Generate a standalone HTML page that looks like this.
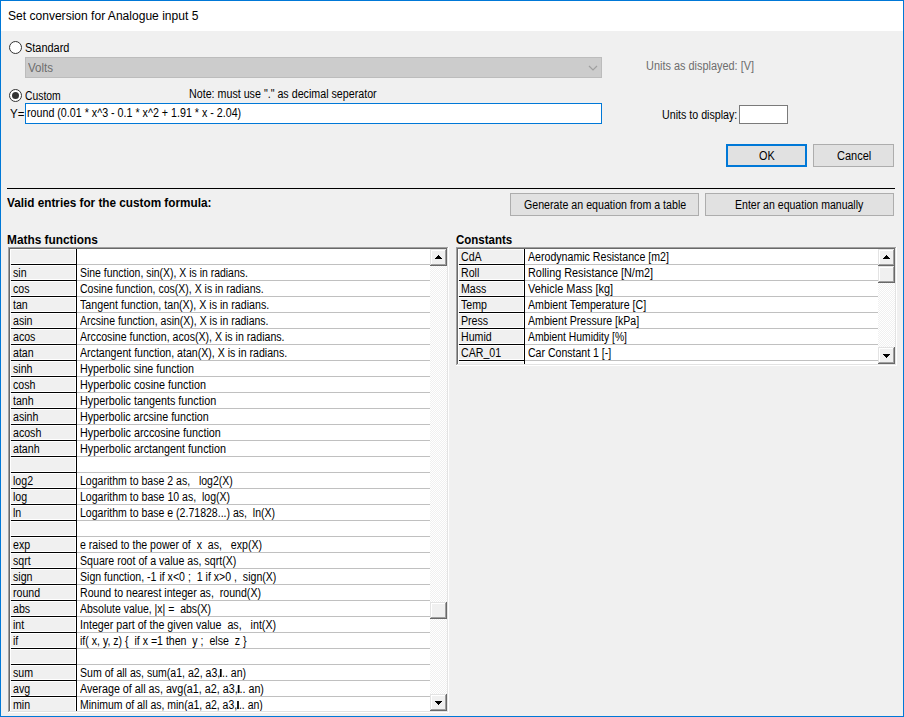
<!DOCTYPE html>
<html><head><meta charset="utf-8"><style>
html,body{margin:0;padding:0;width:904px;height:717px;overflow:hidden;background:#f0f0f0}
.b{position:absolute;box-sizing:border-box}
.t{position:absolute;font-family:"Liberation Sans",sans-serif;line-height:16px;height:16px;white-space:pre;transform-origin:0 0}
svg.b{display:block}
</style></head><body>
<div class="b" style="left:0px;top:0px;width:904px;height:717px;background:#0078d7"></div><div class="b" style="left:1px;top:1px;width:902px;height:715px;background:#f0f0f0"></div><div class="b" style="left:1px;top:1px;width:902px;height:30px;background:#fff"></div><div class="t" style="left:7.8px;top:8px;color:#000;font-size:12px;transform:scaleX(1.0046);">Set conversion for Analogue input 5</div><div class="b" style="left:9px;top:41px;width:13px;height:13px;border:1px solid #333;border-radius:50%;background:#fff;box-sizing:border-box"></div><div class="t" style="left:24.51px;top:40px;color:#000;font-size:12px;transform:scaleX(0.9122);">Standard</div><div class="b" style="left:25px;top:57px;width:577px;height:21px;background:#ccc;border:1px solid #bcbcbc;box-sizing:border-box"></div><div class="t" style="left:28.39px;top:60px;color:#6d6d6d;font-size:12px;transform:scaleX(0.9643);">Volts</div><svg class="b" style="left:588px;top:64px" width="11" height="8"><polyline points="1,2 5,6 9,2" fill="none" stroke="#a0a0a0" stroke-width="1.2"/></svg><div class="t" style="left:645.88px;top:57.5px;color:#6d6d6d;font-size:12px;transform:scaleX(0.9095);">Units as displayed: [V]</div><div class="b" style="left:9px;top:89px;width:13px;height:13px;border:1px solid #333;border-radius:50%;background:#fff;box-sizing:border-box"></div><div class="b" style="left:12px;top:92px;width:7px;height:7px;border-radius:50%;background:#333"></div><div class="t" style="left:25.17px;top:88px;color:#000;font-size:12px;transform:scaleX(0.8646);">Custom</div><div class="t" style="left:188.79px;top:86px;color:#000;font-size:12px;transform:scaleX(0.8911);">Note: must use &quot;.&quot; as decimal seperator</div><div class="t" style="left:10.14px;top:106px;color:#000;font-size:12px;transform:scaleX(0.9596);">Y=</div><div class="b" style="left:25px;top:103px;width:577px;height:21px;background:#fff;border:1px solid #0078d7;box-sizing:border-box"></div><div class="t" style="left:27.31px;top:105px;color:#000;font-size:12px;transform:scaleX(0.8909);">round (0.01 * x^3 - 0.1 * x^2 + 1.91 * x - 2.04)</div><div class="t" style="left:661.6px;top:106.5px;color:#000;font-size:12px;transform:scaleX(0.8893);">Units to display:</div><div class="b" style="left:739px;top:105px;width:49px;height:19px;background:#fff;border:1px solid #7a7a7a;box-sizing:border-box"></div><div class="b" style="left:726px;top:144px;width:81px;height:23px;background:#e1e1e1;border:2px solid #0078d7;box-sizing:border-box"></div><div class="t" style="left:758.91px;top:148px;color:#000;font-size:12px;transform:scaleX(0.9035);">OK</div><div class="b" style="left:813px;top:144px;width:81px;height:23px;background:#e1e1e1;border:1px solid #adadad;box-sizing:border-box"></div><div class="t" style="left:836.63px;top:148px;color:#000;font-size:12px;transform:scaleX(0.9188);">Cancel</div><div class="b" style="left:7px;top:188px;width:888px;height:1px;background:#000"></div><div class="t" style="left:6.88px;top:195px;color:#000;font-size:12px;font-weight:bold;transform:scaleX(0.9791);">Valid entries for the custom formula:</div><div class="b" style="left:510px;top:193px;width:189px;height:23px;background:#e1e1e1;border:1px solid #adadad;box-sizing:border-box"></div><div class="t" style="left:523.64px;top:197px;color:#000;font-size:12px;transform:scaleX(0.8872);">Generate an equation from a table</div><div class="b" style="left:705px;top:193px;width:189px;height:23px;background:#e1e1e1;border:1px solid #adadad;box-sizing:border-box"></div><div class="t" style="left:735.17px;top:197px;color:#000;font-size:12px;transform:scaleX(0.8782);">Enter an equation manually</div><div class="t" style="left:6.82px;top:232px;color:#000;font-size:12px;font-weight:bold;transform:scaleX(0.9882);">Maths functions</div><div class="t" style="left:455.66px;top:232px;color:#000;font-size:12px;font-weight:bold;transform:scaleX(0.9589);">Constants</div><div class="b" style="left:8px;top:247px;width:441px;height:466px;background:#fff"></div><div class="b" style="left:8px;top:247px;width:440px;height:465px;background:#a0a0a0"></div><div class="b" style="left:9px;top:248px;width:439px;height:464px;background:#e3e3e3"></div><div class="b" style="left:9px;top:248px;width:438px;height:463px;background:#696969"></div><div class="b" style="left:10px;top:249px;width:437px;height:462px;background:#fff"></div><div class="b" style="left:10px;top:249px;width:437px;height:462px;overflow:hidden;background:#fff"><div class="b" style="left:0px;top:0px;width:66px;height:462px;background:#f0f0f0"></div><div class="b" style="left:66px;top:0px;width:1px;height:462px;background:#000"></div><div class="b" style="left:0px;top:0px;width:66px;height:15px;box-shadow:inset 1px 1px 0 #fff,inset -1px -1px 0 #fff"></div><div class="b" style="left:1px;top:15px;width:66px;height:1px;background:#000"></div><div class="b" style="left:67px;top:15px;width:353px;height:1px;background:#c0c0c0"></div><div class="b" style="left:0px;top:16px;width:66px;height:15px;box-shadow:inset 1px 1px 0 #fff,inset -1px -1px 0 #fff"></div><div class="b" style="left:1px;top:31px;width:66px;height:1px;background:#000"></div><div class="b" style="left:67px;top:31px;width:353px;height:1px;background:#c0c0c0"></div><div class="t" style="left:3px;top:16px;color:#000;font-size:12px;transform:scaleX(0.885);">sin</div><div class="t" style="left:69.5px;top:16px;color:#000;font-size:12px;transform:scaleX(0.8707);">Sine function, sin(X), X is in radians.</div><div class="b" style="left:0px;top:32px;width:66px;height:15px;box-shadow:inset 1px 1px 0 #fff,inset -1px -1px 0 #fff"></div><div class="b" style="left:1px;top:47px;width:66px;height:1px;background:#000"></div><div class="b" style="left:67px;top:47px;width:353px;height:1px;background:#c0c0c0"></div><div class="t" style="left:3px;top:32px;color:#000;font-size:12px;transform:scaleX(0.885);">cos</div><div class="t" style="left:69.5px;top:32px;color:#000;font-size:12px;transform:scaleX(0.877);">Cosine function, cos(X), X is in radians.</div><div class="b" style="left:0px;top:48px;width:66px;height:15px;box-shadow:inset 1px 1px 0 #fff,inset -1px -1px 0 #fff"></div><div class="b" style="left:1px;top:63px;width:66px;height:1px;background:#000"></div><div class="b" style="left:67px;top:63px;width:353px;height:1px;background:#c0c0c0"></div><div class="t" style="left:3px;top:48px;color:#000;font-size:12px;transform:scaleX(0.885);">tan</div><div class="t" style="left:69.5px;top:48px;color:#000;font-size:12px;transform:scaleX(0.8891);">Tangent function, tan(X), X is in radians.</div><div class="b" style="left:0px;top:64px;width:66px;height:15px;box-shadow:inset 1px 1px 0 #fff,inset -1px -1px 0 #fff"></div><div class="b" style="left:1px;top:79px;width:66px;height:1px;background:#000"></div><div class="b" style="left:67px;top:79px;width:353px;height:1px;background:#c0c0c0"></div><div class="t" style="left:3px;top:64px;color:#000;font-size:12px;transform:scaleX(0.885);">asin</div><div class="t" style="left:69.5px;top:64px;color:#000;font-size:12px;transform:scaleX(0.875);">Arcsine function, asin(X), X is in radians.</div><div class="b" style="left:0px;top:80px;width:66px;height:15px;box-shadow:inset 1px 1px 0 #fff,inset -1px -1px 0 #fff"></div><div class="b" style="left:1px;top:95px;width:66px;height:1px;background:#000"></div><div class="b" style="left:67px;top:95px;width:353px;height:1px;background:#c0c0c0"></div><div class="t" style="left:3px;top:80px;color:#000;font-size:12px;transform:scaleX(0.885);">acos</div><div class="t" style="left:69.5px;top:80px;color:#000;font-size:12px;transform:scaleX(0.8838);">Arccosine function, acos(X), X is in radians.</div><div class="b" style="left:0px;top:96px;width:66px;height:15px;box-shadow:inset 1px 1px 0 #fff,inset -1px -1px 0 #fff"></div><div class="b" style="left:1px;top:111px;width:66px;height:1px;background:#000"></div><div class="b" style="left:67px;top:111px;width:353px;height:1px;background:#c0c0c0"></div><div class="t" style="left:3px;top:96px;color:#000;font-size:12px;transform:scaleX(0.885);">atan</div><div class="t" style="left:69.5px;top:96px;color:#000;font-size:12px;transform:scaleX(0.8824);">Arctangent function, atan(X), X is in radians.</div><div class="b" style="left:0px;top:112px;width:66px;height:15px;box-shadow:inset 1px 1px 0 #fff,inset -1px -1px 0 #fff"></div><div class="b" style="left:1px;top:127px;width:66px;height:1px;background:#000"></div><div class="b" style="left:67px;top:127px;width:353px;height:1px;background:#c0c0c0"></div><div class="t" style="left:3px;top:112px;color:#000;font-size:12px;transform:scaleX(0.885);">sinh</div><div class="t" style="left:69.5px;top:112px;color:#000;font-size:12px;transform:scaleX(0.8937);">Hyperbolic sine function</div><div class="b" style="left:0px;top:128px;width:66px;height:15px;box-shadow:inset 1px 1px 0 #fff,inset -1px -1px 0 #fff"></div><div class="b" style="left:1px;top:143px;width:66px;height:1px;background:#000"></div><div class="b" style="left:67px;top:143px;width:353px;height:1px;background:#c0c0c0"></div><div class="t" style="left:3px;top:128px;color:#000;font-size:12px;transform:scaleX(0.885);">cosh</div><div class="t" style="left:69.5px;top:128px;color:#000;font-size:12px;transform:scaleX(0.8987);">Hyperbolic cosine function</div><div class="b" style="left:0px;top:144px;width:66px;height:15px;box-shadow:inset 1px 1px 0 #fff,inset -1px -1px 0 #fff"></div><div class="b" style="left:1px;top:159px;width:66px;height:1px;background:#000"></div><div class="b" style="left:67px;top:159px;width:353px;height:1px;background:#c0c0c0"></div><div class="t" style="left:3px;top:144px;color:#000;font-size:12px;transform:scaleX(0.885);">tanh</div><div class="t" style="left:69.5px;top:144px;color:#000;font-size:12px;transform:scaleX(0.8992);">Hyperbolic tangents function</div><div class="b" style="left:0px;top:160px;width:66px;height:15px;box-shadow:inset 1px 1px 0 #fff,inset -1px -1px 0 #fff"></div><div class="b" style="left:1px;top:175px;width:66px;height:1px;background:#000"></div><div class="b" style="left:67px;top:175px;width:353px;height:1px;background:#c0c0c0"></div><div class="t" style="left:3px;top:160px;color:#000;font-size:12px;transform:scaleX(0.885);">asinh</div><div class="t" style="left:69.5px;top:160px;color:#000;font-size:12px;transform:scaleX(0.8932);">Hyperbolic arcsine function</div><div class="b" style="left:0px;top:176px;width:66px;height:15px;box-shadow:inset 1px 1px 0 #fff,inset -1px -1px 0 #fff"></div><div class="b" style="left:1px;top:191px;width:66px;height:1px;background:#000"></div><div class="b" style="left:67px;top:191px;width:353px;height:1px;background:#c0c0c0"></div><div class="t" style="left:3px;top:176px;color:#000;font-size:12px;transform:scaleX(0.885);">acosh</div><div class="t" style="left:69.5px;top:176px;color:#000;font-size:12px;transform:scaleX(0.8987);">Hyperbolic arccosine function</div><div class="b" style="left:0px;top:192px;width:66px;height:15px;box-shadow:inset 1px 1px 0 #fff,inset -1px -1px 0 #fff"></div><div class="b" style="left:1px;top:207px;width:66px;height:1px;background:#000"></div><div class="b" style="left:67px;top:207px;width:353px;height:1px;background:#c0c0c0"></div><div class="t" style="left:3px;top:192px;color:#000;font-size:12px;transform:scaleX(0.885);">atanh</div><div class="t" style="left:69.5px;top:192px;color:#000;font-size:12px;transform:scaleX(0.9004);">Hyperbolic arctangent function</div><div class="b" style="left:0px;top:208px;width:66px;height:15px;box-shadow:inset 1px 1px 0 #fff,inset -1px -1px 0 #fff"></div><div class="b" style="left:1px;top:223px;width:66px;height:1px;background:#000"></div><div class="b" style="left:67px;top:223px;width:353px;height:1px;background:#c0c0c0"></div><div class="b" style="left:0px;top:224px;width:66px;height:15px;box-shadow:inset 1px 1px 0 #fff,inset -1px -1px 0 #fff"></div><div class="b" style="left:1px;top:239px;width:66px;height:1px;background:#000"></div><div class="b" style="left:67px;top:239px;width:353px;height:1px;background:#c0c0c0"></div><div class="t" style="left:3px;top:224px;color:#000;font-size:12px;transform:scaleX(0.885);">log2</div><div class="t" style="left:69.5px;top:224px;color:#000;font-size:12px;transform:scaleX(0.8781);">Logarithm to base 2 as,   log2(X)</div><div class="b" style="left:0px;top:240px;width:66px;height:15px;box-shadow:inset 1px 1px 0 #fff,inset -1px -1px 0 #fff"></div><div class="b" style="left:1px;top:255px;width:66px;height:1px;background:#000"></div><div class="b" style="left:67px;top:255px;width:353px;height:1px;background:#c0c0c0"></div><div class="t" style="left:3px;top:240px;color:#000;font-size:12px;transform:scaleX(0.885);">log</div><div class="t" style="left:69.5px;top:240px;color:#000;font-size:12px;transform:scaleX(0.8792);">Logarithm to base 10 as,  log(X)</div><div class="b" style="left:0px;top:256px;width:66px;height:15px;box-shadow:inset 1px 1px 0 #fff,inset -1px -1px 0 #fff"></div><div class="b" style="left:1px;top:271px;width:66px;height:1px;background:#000"></div><div class="b" style="left:67px;top:271px;width:353px;height:1px;background:#c0c0c0"></div><div class="t" style="left:3px;top:256px;color:#000;font-size:12px;transform:scaleX(0.885);">ln</div><div class="t" style="left:69.5px;top:256px;color:#000;font-size:12px;transform:scaleX(0.8785);">Logarithm to base e (2.71828...) as,  ln(X)</div><div class="b" style="left:0px;top:272px;width:66px;height:15px;box-shadow:inset 1px 1px 0 #fff,inset -1px -1px 0 #fff"></div><div class="b" style="left:1px;top:287px;width:66px;height:1px;background:#000"></div><div class="b" style="left:67px;top:287px;width:353px;height:1px;background:#c0c0c0"></div><div class="b" style="left:0px;top:288px;width:66px;height:15px;box-shadow:inset 1px 1px 0 #fff,inset -1px -1px 0 #fff"></div><div class="b" style="left:1px;top:303px;width:66px;height:1px;background:#000"></div><div class="b" style="left:67px;top:303px;width:353px;height:1px;background:#c0c0c0"></div><div class="t" style="left:3px;top:288px;color:#000;font-size:12px;transform:scaleX(0.885);">exp</div><div class="t" style="left:69.5px;top:288px;color:#000;font-size:12px;transform:scaleX(0.8833);">e raised to the power of  x  as,   exp(X)</div><div class="b" style="left:0px;top:304px;width:66px;height:15px;box-shadow:inset 1px 1px 0 #fff,inset -1px -1px 0 #fff"></div><div class="b" style="left:1px;top:319px;width:66px;height:1px;background:#000"></div><div class="b" style="left:67px;top:319px;width:353px;height:1px;background:#c0c0c0"></div><div class="t" style="left:3px;top:304px;color:#000;font-size:12px;transform:scaleX(0.885);">sqrt</div><div class="t" style="left:69.5px;top:304px;color:#000;font-size:12px;transform:scaleX(0.8843);">Square root of a value as, sqrt(X)</div><div class="b" style="left:0px;top:320px;width:66px;height:15px;box-shadow:inset 1px 1px 0 #fff,inset -1px -1px 0 #fff"></div><div class="b" style="left:1px;top:335px;width:66px;height:1px;background:#000"></div><div class="b" style="left:67px;top:335px;width:353px;height:1px;background:#c0c0c0"></div><div class="t" style="left:3px;top:320px;color:#000;font-size:12px;transform:scaleX(0.885);">sign</div><div class="t" style="left:69.5px;top:320px;color:#000;font-size:12px;transform:scaleX(0.8815);">Sign function, -1 if x&lt;0 ;  1 if x&gt;0 ,  sign(X)</div><div class="b" style="left:0px;top:336px;width:66px;height:15px;box-shadow:inset 1px 1px 0 #fff,inset -1px -1px 0 #fff"></div><div class="b" style="left:1px;top:351px;width:66px;height:1px;background:#000"></div><div class="b" style="left:67px;top:351px;width:353px;height:1px;background:#c0c0c0"></div><div class="t" style="left:3px;top:336px;color:#000;font-size:12px;transform:scaleX(0.885);">round</div><div class="t" style="left:69.5px;top:336px;color:#000;font-size:12px;transform:scaleX(0.8839);">Round to nearest integer as,  round(X)</div><div class="b" style="left:0px;top:352px;width:66px;height:15px;box-shadow:inset 1px 1px 0 #fff,inset -1px -1px 0 #fff"></div><div class="b" style="left:1px;top:367px;width:66px;height:1px;background:#000"></div><div class="b" style="left:67px;top:367px;width:353px;height:1px;background:#c0c0c0"></div><div class="t" style="left:3px;top:352px;color:#000;font-size:12px;transform:scaleX(0.885);">abs</div><div class="t" style="left:69.5px;top:352px;color:#000;font-size:12px;transform:scaleX(0.8739);">Absolute value, |x| =  abs(X)</div><div class="b" style="left:0px;top:368px;width:66px;height:15px;box-shadow:inset 1px 1px 0 #fff,inset -1px -1px 0 #fff"></div><div class="b" style="left:1px;top:383px;width:66px;height:1px;background:#000"></div><div class="b" style="left:67px;top:383px;width:353px;height:1px;background:#c0c0c0"></div><div class="t" style="left:3px;top:368px;color:#000;font-size:12px;transform:scaleX(0.885);">int</div><div class="t" style="left:69.5px;top:368px;color:#000;font-size:12px;transform:scaleX(0.891);">Integer part of the given value  as,   int(X)</div><div class="b" style="left:0px;top:384px;width:66px;height:15px;box-shadow:inset 1px 1px 0 #fff,inset -1px -1px 0 #fff"></div><div class="b" style="left:1px;top:399px;width:66px;height:1px;background:#000"></div><div class="b" style="left:67px;top:399px;width:353px;height:1px;background:#c0c0c0"></div><div class="t" style="left:3px;top:384px;color:#000;font-size:12px;transform:scaleX(0.885);">if</div><div class="t" style="left:69.5px;top:384px;color:#000;font-size:12px;transform:scaleX(0.8814);">if( x, y, z) {  if x =1 then  y ;  else  z }</div><div class="b" style="left:0px;top:400px;width:66px;height:15px;box-shadow:inset 1px 1px 0 #fff,inset -1px -1px 0 #fff"></div><div class="b" style="left:1px;top:415px;width:66px;height:1px;background:#000"></div><div class="b" style="left:67px;top:415px;width:353px;height:1px;background:#c0c0c0"></div><div class="b" style="left:0px;top:416px;width:66px;height:15px;box-shadow:inset 1px 1px 0 #fff,inset -1px -1px 0 #fff"></div><div class="b" style="left:1px;top:431px;width:66px;height:1px;background:#000"></div><div class="b" style="left:67px;top:431px;width:353px;height:1px;background:#c0c0c0"></div><div class="t" style="left:3px;top:416px;color:#000;font-size:12px;transform:scaleX(0.885);">sum</div><div class="t" style="left:69.5px;top:416px;color:#000;font-size:12px;transform:scaleX(0.8798);">Sum of all as, sum(a1, a2, a3,<span style="display:inline-block;width:2px;height:8px;background:#000"></span>.. an)</div><div class="b" style="left:0px;top:432px;width:66px;height:15px;box-shadow:inset 1px 1px 0 #fff,inset -1px -1px 0 #fff"></div><div class="b" style="left:1px;top:447px;width:66px;height:1px;background:#000"></div><div class="b" style="left:67px;top:447px;width:353px;height:1px;background:#c0c0c0"></div><div class="t" style="left:3px;top:432px;color:#000;font-size:12px;transform:scaleX(0.885);">avg</div><div class="t" style="left:69.5px;top:432px;color:#000;font-size:12px;transform:scaleX(0.8962);">Average of all as, avg(a1, a2, a3,<span style="display:inline-block;width:2px;height:8px;background:#000"></span>.. an)</div><div class="b" style="left:0px;top:448px;width:66px;height:15px;box-shadow:inset 1px 1px 0 #fff,inset -1px -1px 0 #fff"></div><div class="b" style="left:1px;top:463px;width:66px;height:1px;background:#000"></div><div class="b" style="left:67px;top:463px;width:353px;height:1px;background:#c0c0c0"></div><div class="t" style="left:3px;top:448px;color:#000;font-size:12px;transform:scaleX(0.885);">min</div><div class="t" style="left:69.5px;top:448px;color:#000;font-size:12px;transform:scaleX(0.8729);">Minimum of all as, min(a1, a2, a3,<span style="display:inline-block;width:2px;height:8px;background:#000"></span>.. an)</div><div class="b" style="left:420px;top:0px;width:17px;height:462px;background-color:#f0f0f0;background-image:repeating-conic-gradient(#fff 0 25%,#f0f0f0 0 50%);background-size:2px 2px"></div><div class="b" style="left:420px;top:0px;width:17px;height:17px;background:#696969"></div><div class="b" style="left:420px;top:0px;width:16px;height:16px;background:#e3e3e3"></div><div class="b" style="left:421px;top:1px;width:15px;height:15px;background:#a0a0a0"></div><div class="b" style="left:421px;top:1px;width:14px;height:14px;background:#fff"></div><div class="b" style="left:422px;top:2px;width:13px;height:13px;background:#f0f0f0"></div><div class="b" style="left:420px;top:353px;width:17px;height:17px;background:#696969"></div><div class="b" style="left:420px;top:353px;width:16px;height:16px;background:#e3e3e3"></div><div class="b" style="left:421px;top:354px;width:15px;height:15px;background:#a0a0a0"></div><div class="b" style="left:421px;top:354px;width:14px;height:14px;background:#fff"></div><div class="b" style="left:422px;top:355px;width:13px;height:13px;background:#f0f0f0"></div><div class="b" style="left:420px;top:445px;width:17px;height:17px;background:#696969"></div><div class="b" style="left:420px;top:445px;width:16px;height:16px;background:#e3e3e3"></div><div class="b" style="left:421px;top:446px;width:15px;height:15px;background:#a0a0a0"></div><div class="b" style="left:421px;top:446px;width:14px;height:14px;background:#fff"></div><div class="b" style="left:422px;top:447px;width:13px;height:13px;background:#f0f0f0"></div><div class="b" style="left:428px;top:6px;width:1px;height:1px;background:#000"></div><div class="b" style="left:428px;top:455px;width:1px;height:1px;background:#000"></div><div class="b" style="left:427px;top:7px;width:3px;height:1px;background:#000"></div><div class="b" style="left:427px;top:454px;width:3px;height:1px;background:#000"></div><div class="b" style="left:426px;top:8px;width:5px;height:1px;background:#000"></div><div class="b" style="left:426px;top:453px;width:5px;height:1px;background:#000"></div><div class="b" style="left:425px;top:9px;width:7px;height:1px;background:#000"></div><div class="b" style="left:425px;top:452px;width:7px;height:1px;background:#000"></div></div><div class="b" style="left:456px;top:247px;width:441px;height:119px;background:#fff"></div><div class="b" style="left:456px;top:247px;width:440px;height:118px;background:#a0a0a0"></div><div class="b" style="left:457px;top:248px;width:439px;height:117px;background:#e3e3e3"></div><div class="b" style="left:457px;top:248px;width:438px;height:116px;background:#696969"></div><div class="b" style="left:458px;top:249px;width:437px;height:115px;background:#fff"></div><div class="b" style="left:458px;top:249px;width:437px;height:115px;overflow:hidden;background:#fff"><div class="b" style="left:0px;top:0px;width:66px;height:115px;background:#f0f0f0"></div><div class="b" style="left:66px;top:0px;width:1px;height:115px;background:#000"></div><div class="b" style="left:0px;top:0px;width:66px;height:15px;box-shadow:inset 1px 1px 0 #fff,inset -1px -1px 0 #fff"></div><div class="b" style="left:1px;top:15px;width:66px;height:1px;background:#000"></div><div class="b" style="left:67px;top:15px;width:353px;height:1px;background:#c0c0c0"></div><div class="t" style="left:3px;top:0px;color:#000;font-size:12px;transform:scaleX(0.885);">CdA</div><div class="t" style="left:69.5px;top:0px;color:#000;font-size:12px;transform:scaleX(0.8839);">Aerodynamic Resistance [m2]</div><div class="b" style="left:0px;top:16px;width:66px;height:15px;box-shadow:inset 1px 1px 0 #fff,inset -1px -1px 0 #fff"></div><div class="b" style="left:1px;top:31px;width:66px;height:1px;background:#000"></div><div class="b" style="left:67px;top:31px;width:353px;height:1px;background:#c0c0c0"></div><div class="t" style="left:3px;top:16px;color:#000;font-size:12px;transform:scaleX(0.885);">Roll</div><div class="t" style="left:69.5px;top:16px;color:#000;font-size:12px;transform:scaleX(0.9054);">Rolling Resistance [N/m2]</div><div class="b" style="left:0px;top:32px;width:66px;height:15px;box-shadow:inset 1px 1px 0 #fff,inset -1px -1px 0 #fff"></div><div class="b" style="left:1px;top:47px;width:66px;height:1px;background:#000"></div><div class="b" style="left:67px;top:47px;width:353px;height:1px;background:#c0c0c0"></div><div class="t" style="left:3px;top:32px;color:#000;font-size:12px;transform:scaleX(0.885);">Mass</div><div class="t" style="left:69.5px;top:32px;color:#000;font-size:12px;transform:scaleX(0.9113);">Vehicle Mass [kg]</div><div class="b" style="left:0px;top:48px;width:66px;height:15px;box-shadow:inset 1px 1px 0 #fff,inset -1px -1px 0 #fff"></div><div class="b" style="left:1px;top:63px;width:66px;height:1px;background:#000"></div><div class="b" style="left:67px;top:63px;width:353px;height:1px;background:#c0c0c0"></div><div class="t" style="left:3px;top:48px;color:#000;font-size:12px;transform:scaleX(0.885);">Temp</div><div class="t" style="left:69.5px;top:48px;color:#000;font-size:12px;transform:scaleX(0.8872);">Ambient Temperature [C]</div><div class="b" style="left:0px;top:64px;width:66px;height:15px;box-shadow:inset 1px 1px 0 #fff,inset -1px -1px 0 #fff"></div><div class="b" style="left:1px;top:79px;width:66px;height:1px;background:#000"></div><div class="b" style="left:67px;top:79px;width:353px;height:1px;background:#c0c0c0"></div><div class="t" style="left:3px;top:64px;color:#000;font-size:12px;transform:scaleX(0.885);">Press</div><div class="t" style="left:69.5px;top:64px;color:#000;font-size:12px;transform:scaleX(0.8822);">Ambient Pressure [kPa]</div><div class="b" style="left:0px;top:80px;width:66px;height:15px;box-shadow:inset 1px 1px 0 #fff,inset -1px -1px 0 #fff"></div><div class="b" style="left:1px;top:95px;width:66px;height:1px;background:#000"></div><div class="b" style="left:67px;top:95px;width:353px;height:1px;background:#c0c0c0"></div><div class="t" style="left:3px;top:80px;color:#000;font-size:12px;transform:scaleX(0.885);">Humid</div><div class="t" style="left:69.5px;top:80px;color:#000;font-size:12px;transform:scaleX(0.8629);">Ambient Humidity [%]</div><div class="b" style="left:0px;top:96px;width:66px;height:15px;box-shadow:inset 1px 1px 0 #fff,inset -1px -1px 0 #fff"></div><div class="b" style="left:1px;top:111px;width:66px;height:1px;background:#000"></div><div class="b" style="left:67px;top:111px;width:353px;height:1px;background:#c0c0c0"></div><div class="t" style="left:3px;top:96px;color:#000;font-size:12px;transform:scaleX(0.885);">CAR<span style="position:relative;top:-1px">_</span>01</div><div class="t" style="left:69.5px;top:96px;color:#000;font-size:12px;transform:scaleX(0.879);">Car Constant 1 [-]</div><div class="b" style="left:0px;top:112px;width:66px;height:15px;box-shadow:inset 1px 1px 0 #fff,inset -1px -1px 0 #fff"></div><div class="b" style="left:1px;top:127px;width:66px;height:1px;background:#000"></div><div class="b" style="left:67px;top:127px;width:353px;height:1px;background:#c0c0c0"></div><div class="b" style="left:420px;top:0px;width:17px;height:115px;background-color:#f0f0f0;background-image:repeating-conic-gradient(#fff 0 25%,#f0f0f0 0 50%);background-size:2px 2px"></div><div class="b" style="left:420px;top:0px;width:17px;height:17px;background:#696969"></div><div class="b" style="left:420px;top:0px;width:16px;height:16px;background:#e3e3e3"></div><div class="b" style="left:421px;top:1px;width:15px;height:15px;background:#a0a0a0"></div><div class="b" style="left:421px;top:1px;width:14px;height:14px;background:#fff"></div><div class="b" style="left:422px;top:2px;width:13px;height:13px;background:#f0f0f0"></div><div class="b" style="left:420px;top:17px;width:17px;height:17px;background:#696969"></div><div class="b" style="left:420px;top:17px;width:16px;height:16px;background:#e3e3e3"></div><div class="b" style="left:421px;top:18px;width:15px;height:15px;background:#a0a0a0"></div><div class="b" style="left:421px;top:18px;width:14px;height:14px;background:#fff"></div><div class="b" style="left:422px;top:19px;width:13px;height:13px;background:#f0f0f0"></div><div class="b" style="left:420px;top:98px;width:17px;height:17px;background:#696969"></div><div class="b" style="left:420px;top:98px;width:16px;height:16px;background:#e3e3e3"></div><div class="b" style="left:421px;top:99px;width:15px;height:15px;background:#a0a0a0"></div><div class="b" style="left:421px;top:99px;width:14px;height:14px;background:#fff"></div><div class="b" style="left:422px;top:100px;width:13px;height:13px;background:#f0f0f0"></div><div class="b" style="left:428px;top:6px;width:1px;height:1px;background:#000"></div><div class="b" style="left:428px;top:108px;width:1px;height:1px;background:#000"></div><div class="b" style="left:427px;top:7px;width:3px;height:1px;background:#000"></div><div class="b" style="left:427px;top:107px;width:3px;height:1px;background:#000"></div><div class="b" style="left:426px;top:8px;width:5px;height:1px;background:#000"></div><div class="b" style="left:426px;top:106px;width:5px;height:1px;background:#000"></div><div class="b" style="left:425px;top:9px;width:7px;height:1px;background:#000"></div><div class="b" style="left:425px;top:105px;width:7px;height:1px;background:#000"></div></div>
</body></html>
